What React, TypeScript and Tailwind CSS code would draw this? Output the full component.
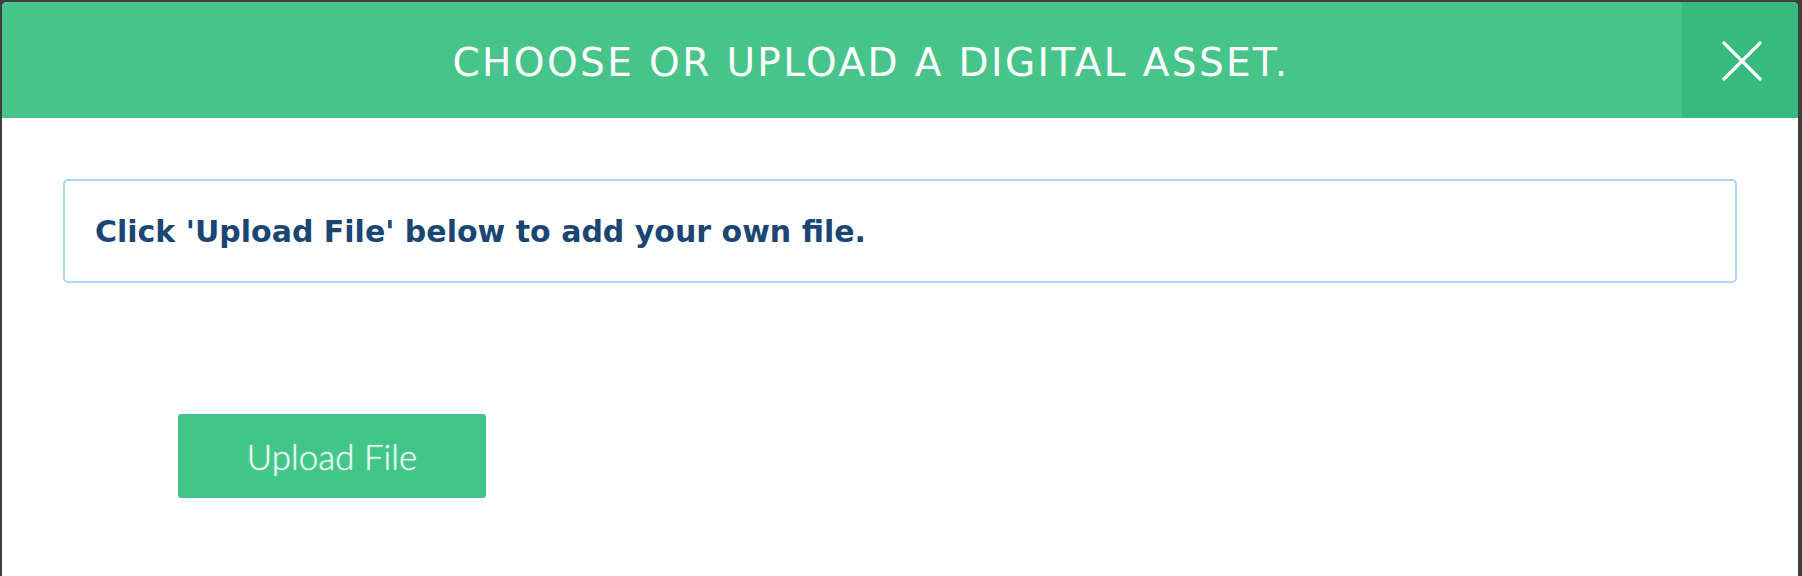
import React from 'react';

const CloseIcon: React.FC = () => (
  <svg width="40" height="40" viewBox="0 0 40 40" fill="none">
    <path d="M2 2L38 38M38 2L2 38" stroke="white" strokeWidth="3.2" strokeLinecap="round" />
  </svg>
);

const App: React.FC = () => {
  return (
    <div className="h-[576px] w-[1802px] bg-[#3e3e3e] pt-[2px] pl-[2px] pr-[4px] overflow-hidden">
      <div className="h-[580px] bg-white rounded-[5px] overflow-hidden flex flex-col">
        {/* Header */}
        <div className="flex h-[116px] bg-[#47c48a]">
          <div className="flex-1 flex items-center justify-center pl-[58px] pt-[6px]">
            <h1 className="text-white text-[39px] tracking-[2.4px] font-normal font-['DejaVu_Sans',sans-serif]">
              CHOOSE OR UPLOAD A DIGITAL ASSET.
            </h1>
          </div>
          <button className="w-[116px] flex items-center justify-center bg-[#37ba7d] pt-[2px] pl-[4px]">
            <CloseIcon />
          </button>
        </div>

        {/* Body */}
        <div className="px-[61px] pt-[61px]">
          <div className="h-[104px] border-2 border-[#abd6f4] rounded-[5px] flex items-center px-[30px]">
            <p className="text-[#1b4573] text-[30px] font-bold font-['DejaVu_Sans',sans-serif]">
              Click 'Upload File' below to add your own file.
            </p>
          </div>
          <div className="pt-[131px] pl-[115px]">
            <button className="w-[308px] h-[84px] rounded-[3px] bg-[#41c589] text-[#effff6] text-[35px] font-light font-['Lato',sans-serif] [text-shadow:0_0_2px_rgba(255,255,255,0.6)]">
              Upload File
            </button>
          </div>
        </div>
      </div>
    </div>
  );
};

export default App;
